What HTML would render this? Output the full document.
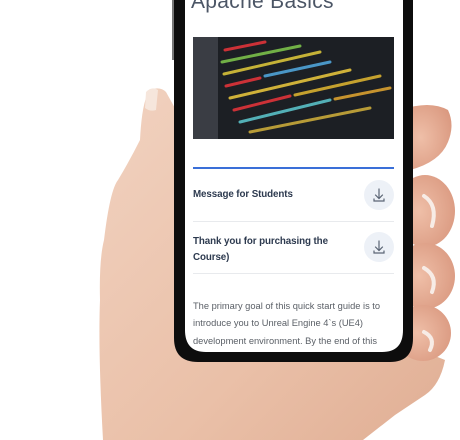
<!DOCTYPE html>
<html><head><meta charset="utf-8"><style>
html,body{margin:0;padding:0;background:#fff;}
body{width:460px;height:440px;position:relative;overflow:hidden;font-family:"Liberation Sans",sans-serif;}
svg{position:absolute;left:0;top:0;}
.t{position:absolute;color:#2d3a4f;font-weight:bold;font-size:9.8px;letter-spacing:-0.1px;}
.p{position:absolute;left:193px;color:#5a5f66;font-size:9.3px;white-space:nowrap;}
.c{position:absolute;width:30px;height:30px;border-radius:50%;background:#edf1f7;}
</style></head><body>
<svg width="460" height="440" viewBox="0 0 460 440">
<defs>
<linearGradient id="sk" x1="0" y1="0" x2="1" y2="1">
<stop offset="0" stop-color="#f1d2c0"/><stop offset="0.6" stop-color="#eac0a8"/><stop offset="1" stop-color="#e0ae94"/></linearGradient>
<radialGradient id="fg" cx="0.4" cy="0.5" r="0.7"><stop offset="0" stop-color="#efbfa8"/><stop offset="1" stop-color="#d9977e"/></radialGradient>
</defs>
<path d="M150 90 Q160 86 166 92 L176 110 L180 350 L420 350 L445 360 Q440 385 425 395 L395 415 L363 440 L103 440 Q98 350 100 300 Q99 260 104 240 Q110 190 118 180 Q130 160 140 140 Q142 100 150 90 Z" fill="url(#sk)"/>
<path d="M146 92 Q152 86 158 90 L156 110 Q150 112 145 108 Z" fill="#f6e6dc"/>
<g fill="url(#fg)">
<path d="M400 110 Q430 100 448 110 Q455 125 448 142 Q440 162 410 170 Z"/>
<ellipse cx="425" cy="211" rx="30" ry="36"/>
<ellipse cx="425" cy="276" rx="30" ry="33"/>
<ellipse cx="423" cy="333" rx="28" ry="28"/>
</g>
<g fill="none" stroke="#f7ece6" stroke-width="4" stroke-linecap="round">
<path d="M424 196 Q438 205 432 226"/>
<path d="M424 268 Q438 276 432 292"/>
<path d="M424 332 Q436 338 430 350"/>
</g>
<path d="M174 -10 L413 -10 L413 338 Q413 362 390 362 L198 362 Q174 362 174 338 Z" fill="#0d0d0d"/>
<rect x="172" y="0" width="2" height="60" fill="#777"/>
<path d="M185 -10 L403 -10 L403 330 Q403 352 382 352 L206 352 Q185 352 185 330 Z" fill="#fff"/>
<rect x="193" y="37" width="201" height="102" fill="#1c1f24"/>
<rect x="193" y="37" width="25" height="102" fill="#3a3d44"/>
<g stroke-width="3" stroke-linecap="round" opacity="0.9">
<path d="M225 50 L265 42" stroke="#e0333a"/>
<path d="M222 62 L300 46" stroke="#7bc04a"/>
<path d="M224 74 L320 52" stroke="#d8c23a"/>
<path d="M226 86 L260 78" stroke="#e0333a"/>
<path d="M265 76 L330 62" stroke="#4fa3d8"/>
<path d="M230 98 L350 70" stroke="#e3c13c"/>
<path d="M234 110 L290 96" stroke="#e0333a"/>
<path d="M295 95 L380 76" stroke="#d8b030"/>
<path d="M240 122 L330 100" stroke="#5ac0c8"/>
<path d="M335 99 L390 88" stroke="#d9a030"/>
<path d="M250 132 L370 108" stroke="#c8a93a"/>
</g>
<rect x="193" y="167" width="201" height="2" fill="#3a6fd8"/>
<rect x="193" y="221" width="201" height="1" fill="#e8eaed"/>
<rect x="193" y="273" width="201" height="1" fill="#e8eaed"/>
</svg>
<div style="position:absolute;left:191px;top:-10px;font-size:21px;color:#4b5565;font-weight:300;letter-spacing:0.3px;">Apache Basics</div>
<div class="t" style="left:193px;top:189px;">Message for Students</div>
<div class="t" style="left:193px;top:234px;line-height:16px;">Thank you for purchasing the<br>Course)</div>
<div class="c" style="left:364px;top:180px;"></div>
<div class="c" style="left:364px;top:232px;"></div>
<svg width="460" height="440" viewBox="0 0 460 440" style="pointer-events:none">
<g fill="none" stroke="#5b6575" stroke-width="1.2" stroke-linecap="round">
<path d="M379 189 V198 M375.5 195 L379 198.5 L382.5 195 M374 199 V201 H384 V199"/>
<path d="M379 241 V250 M375.5 247 L379 250.5 L382.5 247 M374 251 V253 H384 V251"/>
</g></svg>
<div class="p" style="top:301px;">The primary goal of this quick start guide is to</div>
<div class="p" style="top:318px;">introduce you to Unreal Engine 4`s (UE4)</div>
<div class="p" style="top:336px;">development environment. By the end of this</div>
</body></html>
